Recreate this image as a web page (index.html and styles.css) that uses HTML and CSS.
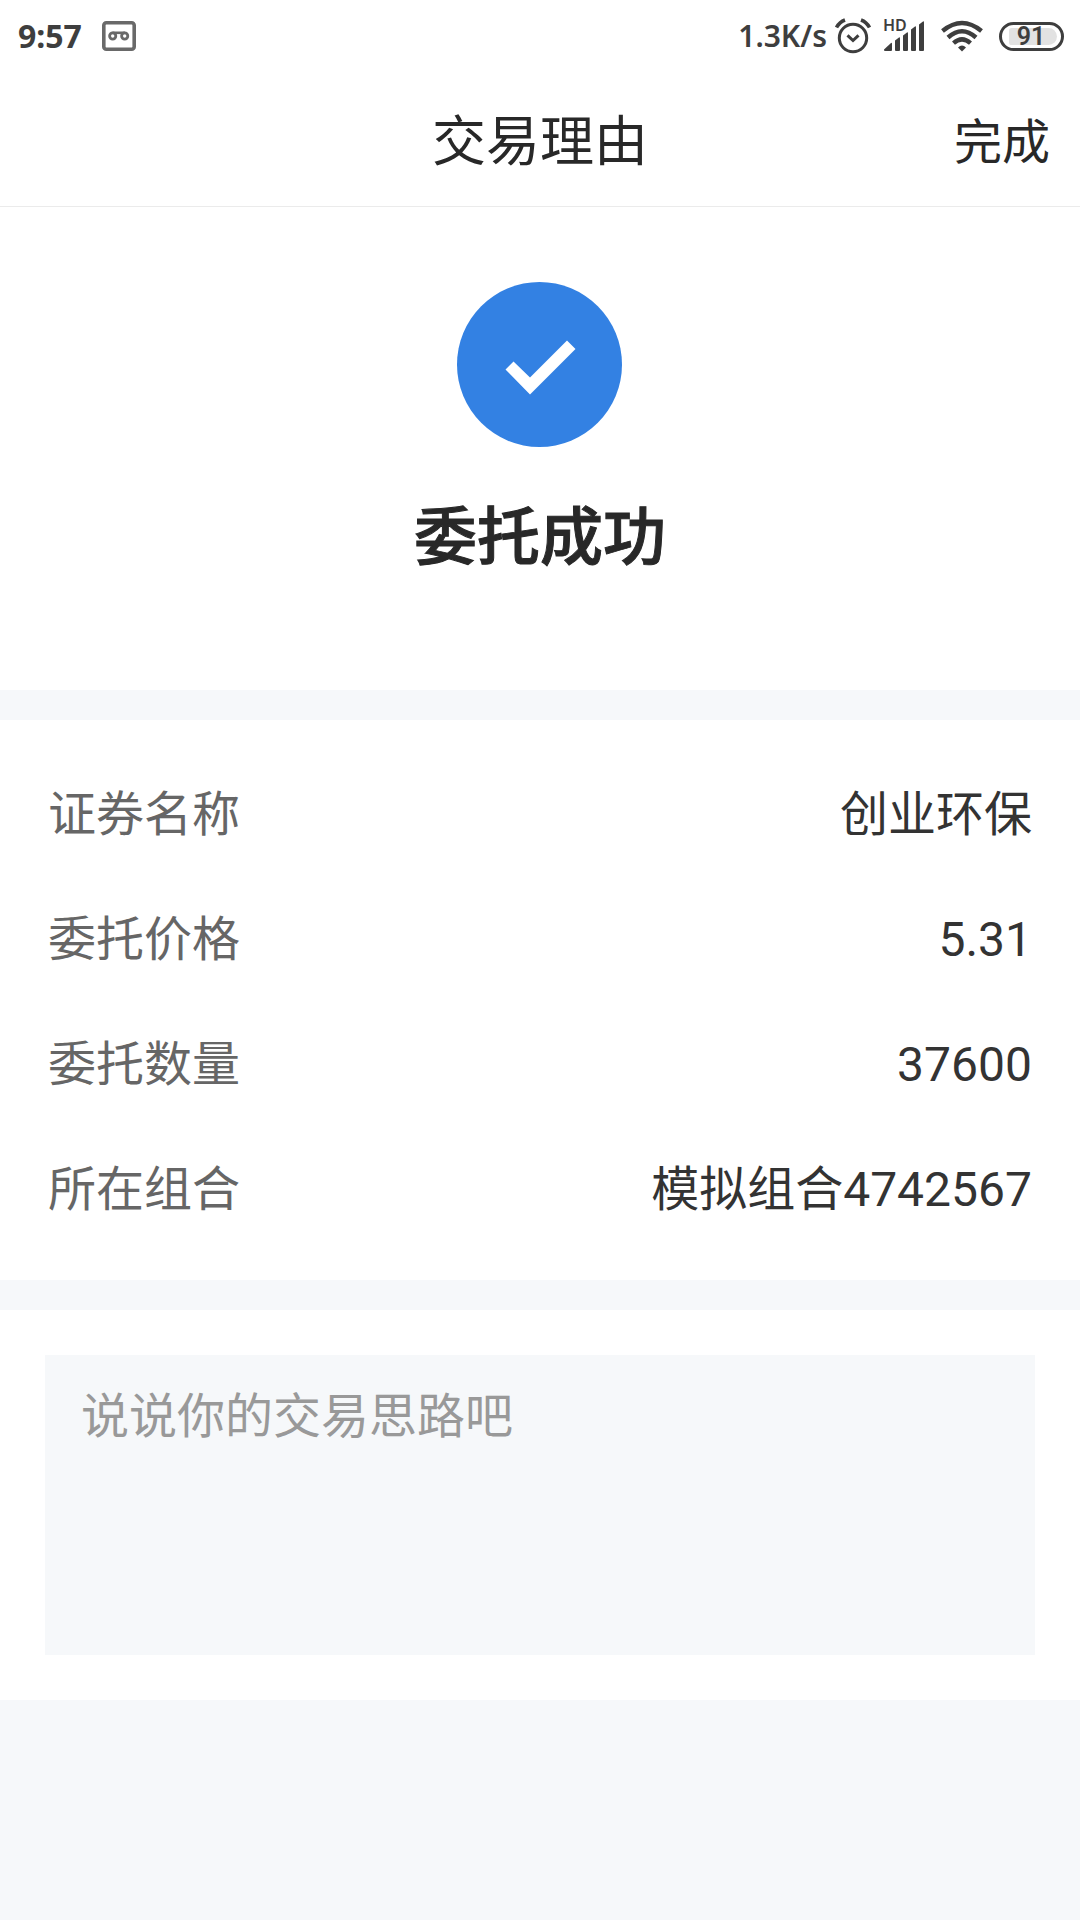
FILE: index.html
```html
<!DOCTYPE html>
<html lang="zh-CN">
<head>
  <meta charset="utf-8">
  <meta name="viewport" content="width=device-width, initial-scale=1">
  <title>交易理由</title>
  <link rel="stylesheet" href="styles.css">
</head>
<body>
  <div class="status-bar">
    <div class="status-group status-left">
      <span class="status-text">9:57</span>
      <svg class="icon-card" width="34" height="30" viewBox="0 0 34 30" fill="none" stroke="#696969" aria-hidden="true">
        <rect x="1.8" y="1.8" width="30.4" height="26.4" rx="2.5" stroke-width="3.6"/>
        <circle cx="10.7" cy="15" r="3.1" stroke-width="2.8"/>
        <circle cx="22.7" cy="15" r="3.1" stroke-width="2.8"/>
        <path d="M10.5 11.8h12.4" stroke-width="2.6"/>
      </svg>
    </div>
    <div class="status-group status-right">
      <span class="status-text">1.3K/s</span>
      <svg class="icon-alarm" width="36" height="36" viewBox="0 0 36 36" fill="none" stroke="#3e3e3e" stroke-width="3" aria-hidden="true">
        <circle cx="18" cy="20" r="13.7"/>
        <path d="M12.5 17.3l5.5 5.2 5.5-5.2"/>
        <path d="M1.5 9.5Q4.5 4 10 2M34.5 9.5Q31.5 4 26 2" stroke-width="3.6"/>
      </svg>
      <span class="signal">
        <span class="signal-hd">HD</span>
        <svg width="42" height="32" viewBox="0 0 42 32" fill="#3e3e3e" aria-hidden="true">
          <path d="M1 29.5l7-6.500q1-.5 1 .7V30q0 1-1 1H2.500Q.5 31 1 29.500z"/>
          <path d="M12 20.500l4-3q1-.5 1 .7V30q0 1-1 1h-3q-1 0-1-1z"/>
          <path d="M20 15.500l4-3q1-.5 1 .7V30q0 1-1 1h-3q-1 0-1-1z"/>
          <path d="M28 9.500l4-3q1-.5 1 .7V30q0 1-1 1h-3q-1 0-1-1z"/>
          <path d="M36 4.500l4-3q1-.5 1 .7V30q0 1-1 1h-3q-1 0-1-1z"/>
        </svg>
      </span>
      <svg class="icon-wifi" width="42" height="32" viewBox="0 0 42 32" fill="none" stroke="#3e3e3e" stroke-width="4.4" aria-hidden="true">
        <path d="M1.5 11Q21-5 40.500 11"/>
        <path d="M7 17.500Q21 5 35 17.500"/>
        <path d="M12.500 23.200Q21 15.500 29.500 23.200"/>
        <path d="M17 27.500Q21 23.500 25 27.500L21 31.500z" fill="#3e3e3e" stroke="none"/>
      </svg>
      <span class="battery"><span class="battery-level">91</span></span>
    </div>
  </div>

  <header class="nav">
    <h1 class="nav-title">交易理由</h1>
    <button class="nav-done" type="button">完成</button>
  </header>

  <main>
    <section class="panel result">
      <svg class="result-icon" width="166" height="165" viewBox="0 0 166 165" aria-hidden="true">
        <circle cx="82.5" cy="82.5" r="82.5" fill="#3381e3"/>
        <path d="M48.500 87.500l8-8L73 95.500 110 58.500l8.500 8.500L73 112.500z" fill="#fff"/>
      </svg>
      <h2 class="result-title">委托成功</h2>
    </section>

    <dl class="panel details">
      <div class="row"><dt>证券名称</dt><dd>创业环保</dd></div>
      <div class="row"><dt>委托价格</dt><dd>5.31</dd></div>
      <div class="row"><dt>委托数量</dt><dd>37600</dd></div>
      <div class="row"><dt>所在组合</dt><dd>模拟组合4742567</dd></div>
    </dl>

    <section class="panel reason">
      <textarea class="reason-input" aria-label="交易理由" placeholder="说说你的交易思路吧"></textarea>
    </section>
  </main>
</body>
</html>
```

FILE: styles.css
```css
* {
  box-sizing: border-box;
}

body {
  margin: 0;
  background: #f6f8fa;
  color: #282828;
  font-family: Roboto, "Noto Sans CJK SC", sans-serif;
}

h1,
h2,
dl,
dd {
  margin: 0;
}

svg {
  display: block;
  flex: none;
}

/* Status bar */
.status-bar {
  display: flex;
  justify-content: space-between;
  align-items: center;
  height: 72px;
  padding: 0 16px 0 18px;
  background: #fff;
  color: #3e3e3e;
}

.status-group {
  display: flex;
  align-items: center;
}

.status-left {
  gap: 20px;
}

.status-right {
  gap: 12px;
}

.status-text {
  font: 700 32px/40px "Noto Sans", sans-serif;
}

.status-right .status-text {
  font-size: 30px;
  font-weight: 600;
}

.icon-alarm {
  margin-left: -4px;
}

.signal {
  position: relative;
}

.signal-hd {
  position: absolute;
  top: -3px;
  left: 0;
  font: 600 16px/16px "Noto Sans", sans-serif;
}

.icon-wifi {
  margin-left: 4px;
}

.battery {
  display: flex;
  width: 65px;
  height: 29px;
  margin-left: 4px;
  padding: 3px 4px 3px 7px;
  border: 3px solid #3e3e3e;
  border-radius: 15px;
}

.battery-level {
  flex: 1;
  padding-right: 4px;
  border-radius: 3px 9px 9px 3px;
  background: #e2e2e2;
  text-align: center;
  font: 600 25px/18px Roboto, sans-serif;
}

/* Title bar */
.nav {
  display: grid;
  grid-template-columns: 1fr auto 1fr;
  align-items: center;
  height: 135px;
  padding: 8px 30px 0;
  border-bottom: 1px solid #ebebeb;
  background: #fff;
}

.nav-title {
  grid-column: 2;
  font-size: 54px;
  font-weight: 400;
  line-height: 72px;
}

.nav-done {
  justify-self: end;
  padding: 0;
  border: 0;
  background: none;
  color: inherit;
  font: inherit;
  font-size: 48px;
  line-height: 72px;
}

/* Content */
.panel {
  background: #fff;
}

.result {
  display: flex;
  flex-direction: column;
  align-items: center;
  gap: 46px;
  padding: 75px 30px 107px;
}

.result-title {
  font-size: 63px;
  font-weight: 500;
  line-height: 90px;
  -webkit-text-stroke: 1px currentColor;
}

.details {
  margin: 30px 0;
  padding: 32px 48px 28px;
}

.row {
  display: flex;
  justify-content: space-between;
  font-size: 48px;
  line-height: 125px;
}

.row dt {
  color: #666;
}

.row dd {
  color: #333;
}

.reason {
  padding: 45px;
}

.reason-input {
  display: block;
  width: 100%;
  height: 300px;
  padding: 32px 36px;
  border: 0;
  border-radius: 0;
  outline: 0;
  background: #f6f8fa;
  color: #333;
  font: inherit;
  font-size: 48px;
  line-height: 60px;
  resize: none;
}

.reason-input::placeholder {
  color: #999;
  opacity: 1;
}
```
